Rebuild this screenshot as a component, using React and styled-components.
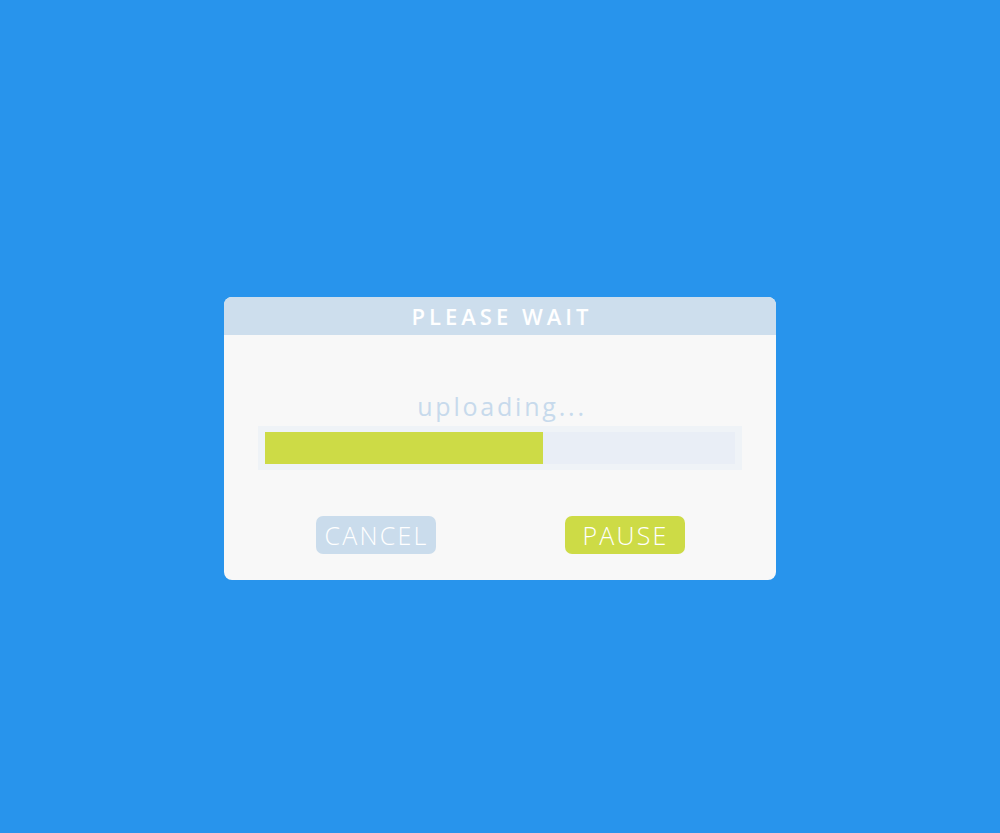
import React from "react";
import styled, { createGlobalStyle } from "styled-components";

const GlobalStyle = createGlobalStyle`
  html, body {
    margin: 0;
    padding: 0;
    background: #2894ec;
  }
  body {
    font-family: "Open Sans", "DejaVu Sans", sans-serif;
  }
`

const Screen = styled.div`
  min-height: 833px;
  box-sizing: border-box;
  padding-top: 297px;
  display: flex;
  justify-content: center;
  align-items: flex-start;
  background: #2894ec;
`
const Dialog = styled.div`
  width: 552px;
  border-radius: 8px;
  overflow: hidden;
  background: #f8f8f8;
  display: flex;
  flex-direction: column;
`
const Header = styled.div`
  height: 38px;
  background: #cddeed;
  display: flex;
  justify-content: center;
  align-items: center;
  color: #fff;
  font-size: 22px;
  font-weight: 600;
  letter-spacing: 4px;
  padding-left: 4px;
`
const Body = styled.div`
  padding: 56px 34px 26px;
  display: flex;
  flex-direction: column;
  align-items: stretch;
`
const Label = styled.div`
  height: 30px;
  line-height: 30px;
  text-align: center;
  color: #c7daec;
  font-size: 25px;
  font-weight: 400;
  letter-spacing: 2.8px;
  padding-left: 4px;
  margin-bottom: 5px;
`
const Track = styled.div`
  height: 44px;
  box-sizing: border-box;
  padding: 6px 7px;
  background: #eff3f7;
  display: flex;
`
const Rail = styled.div`
  flex: 1;
  background: #e9eef6;
  display: flex;
`
const Fill = styled.div`
  background: #cddb46;
  height: 100%;
`
const Actions = styled.div`
  margin-top: 46px;
  display: flex;
  justify-content: center;
  gap: 129px;
`
const Button = styled.button`
  width: 120px;
  height: 38px;
  border: none;
  border-radius: 7px;
  padding: 0 0 0 2px;
  background: ${(p) => (p.$primary ? "#cddb46" : "#cadcec")};
  color: #fff;
  font-family: "Open Sans", "DejaVu Sans", sans-serif;
  font-size: 25px;
  font-weight: 300;
  letter-spacing: 2.2px;
  display: flex;
  justify-content: center;
  align-items: center;
  cursor: pointer;
`

const progress = 0.592;

const App = () => {
  return (
    <>
      <GlobalStyle />
      <Screen>
        <Dialog>
          <Header>PLEASE WAIT</Header>
          <Body>
            <Label>uploading...</Label>
            <Track>
              <Rail>
                <Fill style={{ width: `${progress * 100}%` }} />
              </Rail>
            </Track>
            <Actions>
              <Button type="button">CANCEL</Button>
              <Button type="button" $primary>PAUSE</Button>
            </Actions>
          </Body>
        </Dialog>
      </Screen>
    </>
  )
}

export default App
